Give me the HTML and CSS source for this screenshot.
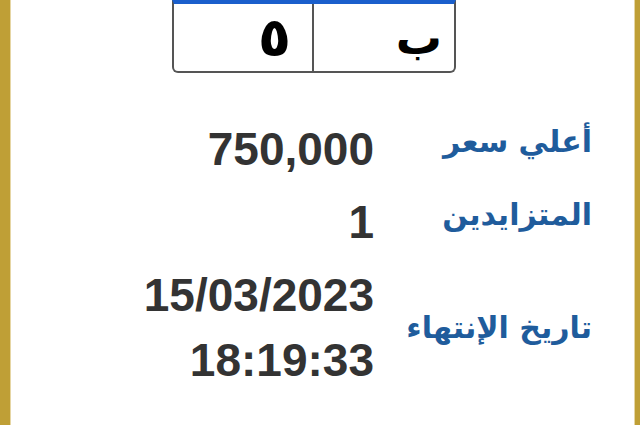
FILE: index.html
```html
<!DOCTYPE html>
<html lang="ar">
<head>
<meta charset="utf-8">
<link rel="stylesheet" href="styles.css">
</head>
<body>
<div class="frame">
  <div class="keys">
    <div class="key key-b">ب</div>
    <div class="key key-5">٥</div>
  </div>
  <div class="info">
    <div class="label">أعلي سعر</div>
    <div class="value">750,000</div>
    <div class="label">المتزايدين</div>
    <div class="value">1</div>
    <div class="label label-mid">تاريخ الإنتهاء</div>
    <div class="value value-multi">
      <div>15/03/2023</div>
      <div>18:19:33</div>
    </div>
  </div>
</div>
</body>
</html>
```
FILE: styles.css
```css
html, body {
  margin: 0;
  padding: 0;
  background: #ffffff;
}

.frame {
  box-sizing: border-box;
  width: 640px;
  height: 425px;
  border-left: 10px solid #bf9f36;
  border-right: 5px solid #bf9f36;
  box-shadow: inset 1px 0 0 #e6d6a4, inset -1px 0 0 #e6d6a4;
  background: #ffffff;
  overflow: hidden;
}

.keys {
  box-sizing: border-box;
  display: flex;
  direction: rtl;
  margin-left: 162px;
  width: 284px;
  height: 73px;
  border: 2px solid #555555;
  border-top: 4px solid #1a5fcc;
  border-radius: 0 0 6px 6px;
}

.key {
  box-sizing: border-box;
  display: flex;
  align-items: center;
  padding-right: 12px;
  font-family: "DejaVu Sans", sans-serif;
  font-weight: bold;
  font-size: 46px;
  line-height: 60px;
  color: #000000;
}

.key-b {
  flex: 0 0 140px;
}

.key-5 {
  flex: 1 1 auto;
  border-right: 2px solid #555555;
  padding-right: 21px;
  font-size: 54px;
}

.info {
  display: grid;
  direction: rtl;
  grid-template-columns: 202px auto;
  column-gap: 16px;
  row-gap: 21px;
  margin: 50px 43px 0 0;
}

.label {
  font-family: "DejaVu Sans", sans-serif;
  font-weight: bold;
  font-size: 30px;
  line-height: 38px;
  color: #1f5c9c;
  align-self: start;
}

.label-mid {
  align-self: center;
}

.value {
  font-family: "Liberation Sans", Arial, sans-serif;
  font-weight: bold;
  font-size: 46px;
  line-height: 52px;
  color: #333333;
  direction: ltr;
  justify-self: start;
  text-align: right;
}

.value-multi {
  display: flex;
  flex-direction: column;
  align-items: flex-end;
  gap: 13px;
}
```
